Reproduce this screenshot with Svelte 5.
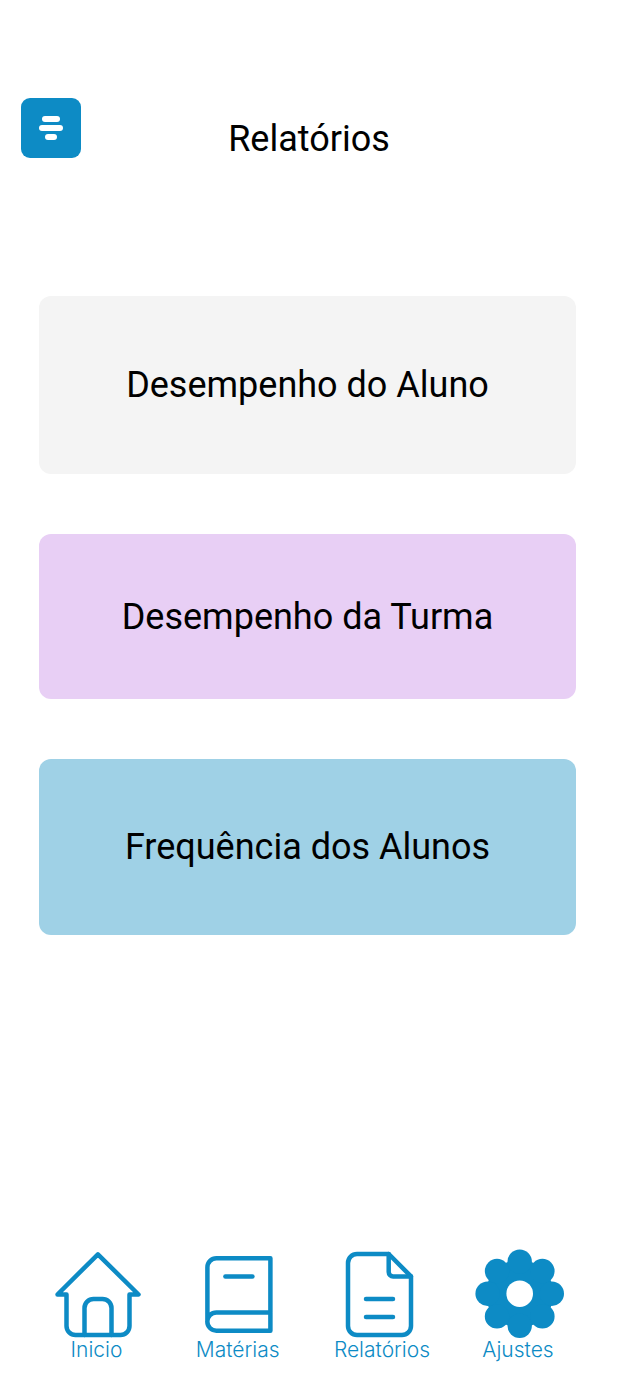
<script>
  const reports = [
    { title: 'Desempenho do Aluno', kind: 'aluno' },
    { title: 'Desempenho da Turma', kind: 'turma' },
    { title: 'Frequência dos Alunos', kind: 'frequencia' }
  ];

  const petals = [0, 45, 90, 135, 180, 225, 270, 315];
</script>

<div class="screen">
  <header>
    <button class="menu" aria-label="Menu">
      <svg width="60" height="60" viewBox="0 0 60 60">
        <rect x="21" y="18" width="18" height="6" rx="3" />
        <rect x="18" y="27" width="24" height="6" rx="3" />
        <rect x="24" y="36" width="12" height="6" rx="3" />
      </svg>
    </button>
    <h1>Relatórios</h1>
  </header>

  <main>
    {#each reports as report}
      <button class="card {report.kind}">{report.title}</button>
    {/each}
  </main>

  <nav>
    <button class="item">
      <svg class="line" width="120" height="104" viewBox="-3.5 0 120 104">
        <path d="M26 58.5H17L57.4 18.3L98 58.5H89V90a9 9 0 0 1-9 9H35a9 9 0 0 1-9-9Z" />
        <path d="M44 99V72a9 9 0 0 1 9-9h9a9 9 0 0 1 9 9V99" />
      </svg>
      <span>Inicio</span>
    </button>
    <button class="item">
      <svg class="line" width="120" height="104" viewBox="-2.4 0 120 104">
        <path d="M27 85.5V31.2a9 9 0 0 1 9-9H90V94.7H36a9.1 9.1 0 0 1 0-18.2H90" />
        <path d="M45 40.4H72" />
      </svg>
      <span>Matérias</span>
    </button>
    <button class="item">
      <svg class="line" width="120" height="104" viewBox="2 0 120 104">
        <path d="M68.7 18H37a9 9 0 0 0-9 9V90a9 9 0 0 0 9 9H82a9 9 0 0 0 9-9V40.4Z" />
        <path d="M68.7 18V36a4.4 4.4 0 0 0 4.4 4.4H91" />
        <path d="M46 63H73M46 81H73" />
      </svg>
      <span>Relatórios</span>
    </button>
    <button class="item">
      <svg class="gear" width="120" height="104" viewBox="-2 0 120 104">
        <g transform="translate(59.7 57.7)">
          <circle r="33.8" />
          {#each petals as angle}
            <circle cy="-32.1" r="12.2" transform="rotate({angle})" />
          {/each}
          <circle class="hole" r="13.3" />
        </g>
      </svg>
      <span>Ajustes</span>
    </button>
  </nav>
</div>

<style>
  :global(body) {
    margin: 0;
    background: #fff;
  }

  .screen {
    display: flex;
    flex-direction: column;
    box-sizing: border-box;
    width: 618px;
    height: 1376px;
    padding-top: 97.5px;
    font-family: Roboto, sans-serif;
    color: #000;
  }

  button {
    margin: 0;
    padding: 0;
    border: none;
    background: none;
    font: inherit;
    color: inherit;
    cursor: pointer;
  }

  svg {
    display: block;
  }

  header {
    display: grid;
    grid-template-columns: 60px 1fr 60px;
    height: 198px;
    padding: 0 21px;
  }

  .menu {
    width: 60px;
    height: 60px;
    border-radius: 9px;
    background: #0d8bc5;
    fill: #fff;
  }

  h1 {
    margin: 20px 0 0;
    font-size: 36px;
    font-weight: 400;
    line-height: 42px;
    text-align: center;
  }

  main {
    display: flex;
    flex-direction: column;
    gap: 60px;
    padding: 0 42px 0 39px;
  }

  .card {
    border-radius: 12px;
    font-size: 36px;
    line-height: 42px;
    text-align: center;
  }

  .aluno {
    height: 178.5px;
    background: #f4f4f4;
  }

  .turma {
    height: 165px;
    background: #e8cff5;
  }

  .frequencia {
    height: 175.5px;
    background: #9fd1e6;
  }

  nav {
    display: grid;
    grid-template-columns: 141px 141.4px 147.2px 124.8px;
    height: 140px;
    margin-top: auto;
    padding-left: 26px;
  }

  .item {
    display: flex;
    flex-direction: column;
    align-items: center;
    color: #0d8bc5;
  }

  .item span {
    font-family: Inter, sans-serif;
    font-size: 21px;
    font-weight: 300;
    line-height: 20px;
  }

  .line {
    fill: none;
    stroke: #0d8bc5;
    stroke-width: 4.5;
    stroke-linecap: round;
    stroke-linejoin: round;
  }

  .gear {
    fill: #0d8bc5;
  }

  .hole {
    fill: #fff;
  }
</style>
